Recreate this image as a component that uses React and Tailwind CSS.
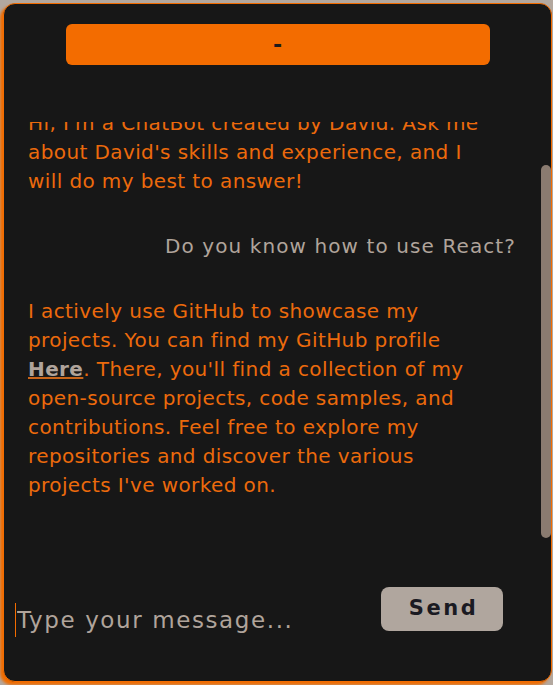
import { useEffect, useRef } from "react";

const messages = [
  {
    from: "bot",
    text: "Hi, I'm a ChatBot created by David. Ask me about David's skills and experience, and I will do my best to answer!",
  },
  { from: "user", text: "Do you know how to use React?" },
  { from: "bot", github: true },
];

export default function App() {
  const listRef = useRef(null);

  useEffect(() => {
    if (listRef.current) listRef.current.scrollTop = 49;
  }, []);

  return (
    <div className="h-[685px] w-[553px] overflow-hidden bg-[#b3a89f] pl-[3px] pt-[3px] font-['DejaVu_Sans',sans-serif]">
      <div className="flex h-[679px] w-[549px] flex-col rounded-[12px] border border-[#f36c00] bg-[#171717] shadow-[-3px_3px_3px_#f06c00]">
        <div className="flex justify-center pt-[20px]">
          <button className="h-[41px] w-[424px] rounded-[6px] bg-[#f36c00] text-[22px] font-bold leading-none text-[#1b1b1b]">-</button>
        </div>

        <div className="relative mt-[57px] h-[438px]">
          <div ref={listRef} className="h-full overflow-hidden pl-[24px] pr-[35px] pt-[36px] pb-[88px]">
            <div className="space-y-[36px] text-[20px] leading-[29px] tracking-[0.4px]">
              {messages.map((m, i) =>
                m.from === "user" ? (
                  <p key={i} className="text-right tracking-[1.1px] text-[#b0a49b]">{m.text}</p>
                ) : m.github ? (
                  <p key={i} className="max-w-[472px] text-[#ec6a0c]">
                    I actively use GitHub to showcase my projects. You can find my GitHub profile{" "}
                    <a className="font-bold text-[#b0a49b] underline decoration-[#c8651a]">Here</a>. There, you'll find a collection of my open-source projects, code samples, and contributions. Feel free to explore my repositories and discover the various projects I've worked on.
                  </p>
                ) : (
                  <p key={i} className="max-w-[472px] text-[#ec6a0c]">{m.text}</p>
                )
              )}
            </div>
          </div>
          <div className="absolute right-0 top-[43px] h-[373px] w-[10px] rounded-full bg-[#8a7b70]" />
        </div>

        <div className="mt-[27px] flex items-start pl-[11px] pr-[48px]">
          <input
            className="mt-[16px] h-[34px] min-w-0 flex-1 border-l border-[#f36c00] bg-transparent pl-[1px] text-[23px] tracking-[1.6px] text-[#b0a49b] outline-none placeholder:text-[#b0a49b]"
            placeholder="Type your message..."
          />
          <button className="h-[44px] w-[122px] rounded-[8px] bg-[#b0a69e] pl-[3px] text-[21px] font-bold tracking-[2.5px] text-[#1a1a22]">Send</button>
        </div>
      </div>
    </div>
  );
}
